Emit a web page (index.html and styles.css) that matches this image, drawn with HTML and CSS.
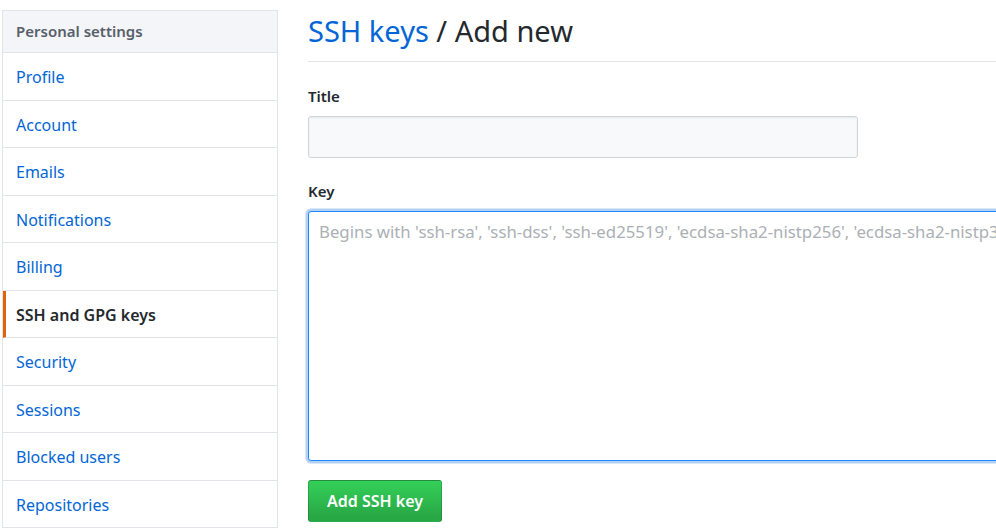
FILE: index.html
```html
<!DOCTYPE html>
<html>
<head>
<meta charset="utf-8">
<link rel="stylesheet" href="styles.css">
</head>
<body>
<div class="page">
  <nav class="menu">
    <div class="menu-heading">Personal settings</div>
    <a class="menu-item">Profile</a>
    <a class="menu-item">Account</a>
    <a class="menu-item">Emails</a>
    <a class="menu-item">Notifications</a>
    <a class="menu-item">Billing</a>
    <a class="menu-item selected">SSH and GPG keys</a>
    <a class="menu-item">Security</a>
    <a class="menu-item">Sessions</a>
    <a class="menu-item">Blocked users</a>
    <a class="menu-item">Repositories</a>
  </nav>
  <main class="content">
    <h2 class="subhead"><a class="crumb">SSH keys</a> / Add new</h2>
    <form class="form">
      <div class="group">
        <label class="label">Title</label>
        <input class="input" type="text">
      </div>
      <div class="group group-key">
        <label class="label">Key</label>
        <textarea class="textarea" placeholder="Begins with 'ssh-rsa', 'ssh-dss', 'ssh-ed25519', 'ecdsa-sha2-nistp256', 'ecdsa-sha2-nistp384', or 'ecdsa-sha2-nistp521'"></textarea>
      </div>
      <button class="btn" type="button">Add SSH key</button>
    </form>
  </main>
</div>
</body>
</html>
```
FILE: styles.css
```css
html, body {
  margin: 0;
  padding: 0;
  background: #fff;
  overflow: hidden;
}
body {
  font-family: "Noto Sans", "Open Sans", sans-serif;
  font-size: 16px;
  color: #24292e;
}
.page {
  display: flex;
  align-items: flex-start;
  gap: 30px;
  padding: 10px 0 0 2px;
  width: 1400px;
}
.menu {
  width: 276px;
  flex: none;
  border: 1px solid #e1e4e8;
  border-bottom: none;
  box-sizing: border-box;
}
.menu-heading {
  height: 42px;
  box-sizing: border-box;
  padding: 9px 13px 10px;
  line-height: 22px;
  font-size: 15px;
  font-weight: 600;
  color: #586069;
  background: #f3f5f8;
  border-bottom: 1px solid #e1e4e8;
}
.menu-item {
  display: block;
  height: 47.5px;
  box-sizing: border-box;
  padding: 13px 13px 11px;
  line-height: 22px;
  color: #0366d6;
  border-bottom: 1px solid #e1e4e8;
}
.menu-item.selected {
  color: #24292e;
  font-weight: 600;
  border-left: 3px solid #e36209;
  padding-left: 10px;
}
.content {
  width: 1000px;
  flex: none;
}
.subhead {
  margin: 0;
  font-size: 29px;
  font-weight: 400;
  line-height: 42px;
  padding-bottom: 9px;
  border-bottom: 1px solid #e1e4e8;
}
.crumb {
  color: #0366d6;
}
.form {
  padding-top: 23px;
}
.group {
  display: flex;
  flex-direction: column;
  margin-bottom: 22px;
}
.group-key {
  margin-bottom: 19px;
}
.label {
  font-weight: 600;
  font-size: 15px;
  line-height: 22px;
  margin-bottom: 9px;
}
.input {
  width: 550px;
  height: 42px;
  box-sizing: border-box;
  border: 1px solid #d1d5da;
  border-radius: 3px;
  background: #f7f9fb;
  box-shadow: inset 0 1px 2px rgba(27,31,35,0.075);
  font-family: inherit;
  font-size: 16px;
}
.textarea {
  width: 1000px;
  height: 250px;
  box-sizing: border-box;
  border: 1px solid #2188ff;
  border-radius: 3px;
  box-shadow: 0 0 0 2.5px rgba(3,102,214,0.3);
  padding: 9px 10px;
  font-family: inherit;
  font-size: 16.8px;
  line-height: 22px;
  resize: none;
  outline: none;
}
.textarea::placeholder {
  color: #abb0b5;
}
.btn {
  width: 134px;
  height: 42px;
  border: 1px solid rgba(27,31,35,0.2);
  border-radius: 3px;
  background: linear-gradient(#34d058, #28a745 90%);
  color: #fff;
  font-family: inherit;
  font-size: 16px;
  font-weight: 600;
  padding: 0;
}
```
